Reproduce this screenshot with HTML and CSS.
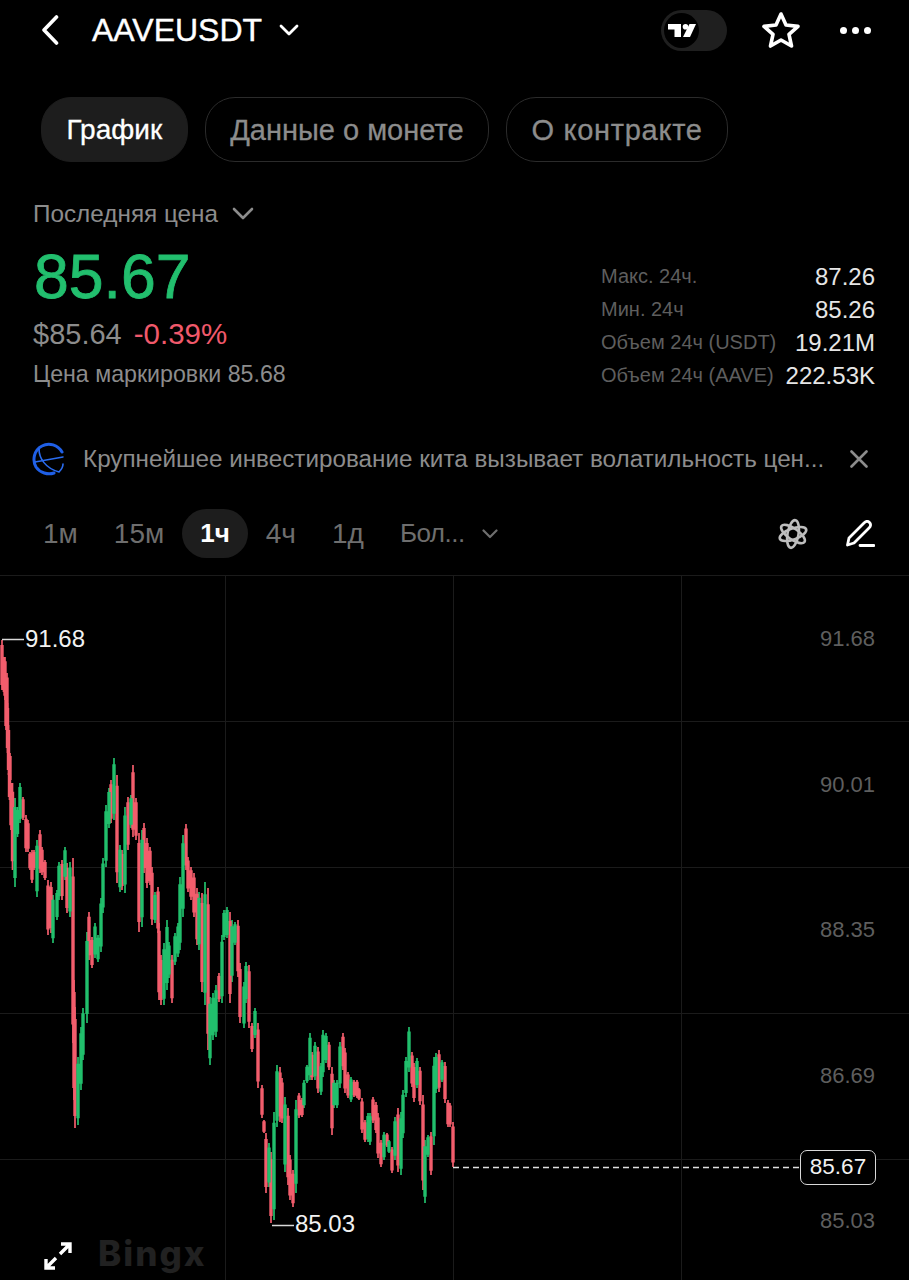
FILE: index.html
```html
<!DOCTYPE html>
<html lang="ru">
<head>
    <meta charset="UTF-8">
    <title>AAVEUSDT</title>
    <link rel="stylesheet" href="styles.css">
</head>
<body>
    <header class="topbar">
        <svg class="back" width="18" height="30" viewBox="0 0 18 30"><path d="M15.5 2 3 15l12.500 13"/></svg>
        <span class="symbol">AAVEUSDT</span>
        <svg class="symbol-arrow" width="20" height="12" viewBox="0 0 20 12"><path d="M2 2l8 8 8-8"/></svg>
        <div class="topbar-right">
            <div class="tv-toggle">
                <div class="tv-knob">
                    <svg width="28" height="15" viewBox="0 0 28 15"><path d="M0 1h13v13H6.500V6.500H0z"/><circle cx="17.500" cy="3.800" r="2.800"/><path d="M21.500 1H28l-6 13h-7z"/></svg>
                </div>
            </div>
            <svg class="star" width="40" height="38" viewBox="0 0 40 38"><path d="M20 3l5 11 12 1.400-9 8 2.500 11.600L20 29l-10.500 6L12 23.400l-9-8L15 14z"/></svg>
            <div class="more"><i></i><i></i><i></i></div>
        </div>
    </header>

    <nav class="tabs">
        <div class="tab active">График</div>
        <div class="tab">Данные о монете</div>
        <div class="tab tab-wide">О контракте</div>
    </nav>

    <section class="price-block">
        <div class="price-left">
            <div class="last-label">Последняя цена
                <svg width="22" height="14" viewBox="0 0 22 14"><path d="M2 2l9 9 9-9"/></svg>
            </div>
            <div class="last-price">85.67</div>
            <div class="sub-price">$85.64 <span class="change">-0.39%</span></div>
            <div class="mark-price">Цена маркировки 85.68</div>
        </div>
        <div class="stats">
            <div class="stat"><span>Макс. 24ч.</span><b>87.26</b></div>
            <div class="stat"><span>Мин. 24ч</span><b>85.26</b></div>
            <div class="stat"><span>Объем 24ч (USDT)</span><b>19.21M</b></div>
            <div class="stat"><span>Объем 24ч (AAVE)</span><b>222.53K</b></div>
        </div>
    </section>

    <section class="news">
        <svg class="globe" width="34" height="34" viewBox="0 0 34 34">
            <path class="globe-rim" d="M30 10C26 3 17 0 10 4 2 8 0 18 4 25c4 6 12 8 18 6"/>
            <path class="globe-thin" d="M3 20l28-5M7 7c0 9 6 19 20 23 3-3 4-6 4-8"/>
        </svg>
        <span class="news-text">Крупнейшее инвестирование кита вызывает волатильность цен...</span>
        <svg class="news-close" width="18" height="18" viewBox="0 0 18 18"><path d="M1.500 1.500l15 15M16.500 1.500l-15 15"/></svg>
    </section>

    <section class="periods">
        <span class="period">1м</span>
        <span class="period">15м</span>
        <span class="period active">1ч</span>
        <span class="period">4ч</span>
        <span class="period">1д</span>
        <span class="period more-period">Бол...
            <svg width="16" height="10" viewBox="0 0 16 10"><path d="M1.500 1.500 8 8l6.500-6.500"/></svg>
        </span>
        <div class="period-tools">
            <svg class="atom" width="32" height="32" viewBox="0 0 32 32">
                <ellipse cx="16" cy="16" rx="14" ry="5.500" transform="rotate(35 16 16)"/>
                <ellipse cx="16" cy="16" rx="14" ry="5.500" transform="rotate(100 16 16)"/>
                <ellipse cx="16" cy="16" rx="14" ry="5.500" transform="rotate(160 16 16)"/>
            </svg>
            <svg class="pen" width="30" height="28" viewBox="0 0 30 28"><path d="M2.500 25 4 18 19 3c2-2 4-2 5.500-.5s1.500 3.500-.5 5.500L9 23zM15 25.500h14"/></svg>
        </div>
    </section>

    <section class="chart">
        <svg class="chart-svg" width="909" height="705" viewBox="0 575 909 705">
            <path class="grid" d="M0 575.500H909M0 721.500H909M0 867.500H909M0 1013.500H909M0 1159.500H800M876 1159.500H909M225.500 575V1280M453.500 575V1280M681.500 575V1280"/>
            <path id="redWick" class="wick red"/>
            <path id="greenWick" class="wick green"/>
            <path id="redBody" class="body red"/>
            <path id="greenBody" class="body green"/>
            <path class="marker" d="M2 639.500H24M272 1225.500H294"/>
            <path class="last-line" d="M453 1167.500H800"/>
        </svg>
        <span class="mark high">91.68</span>
        <span class="mark low">85.03</span>
        <span class="axis axis-1">91.68</span>
        <span class="axis axis-2">90.01</span>
        <span class="axis axis-3">88.35</span>
        <span class="axis axis-4">86.69</span>
        <span class="axis axis-5">85.03</span>
        <span class="price-tag">85.67</span>
        <svg class="expand" width="28" height="28" viewBox="0 0 28 28"><path d="M17 2h9v9M26 2 16 12M11 26H2v-9M2 26l10-10"/></svg>
        <span class="watermark">Bingx</span>
    </section>

    <script src="chart.js"></script>
</body>
</html>
```

FILE: styles.css
```css
* {
    box-sizing: border-box;
}
html, body {
    margin: 0;
    background: #000;
}
body {
    width: 909px;
    height: 1280px;
    overflow: hidden;
    font-family: 'Liberation Sans', Arial, sans-serif;
    color: #8c8c8c;
}
svg path, svg ellipse {
    fill: none;
}

/* top bar */
.topbar {
    display: flex;
    align-items: center;
    height: 62px;
    padding: 0 38px 2px 41px;
}
.back path {
    stroke: #fff;
    stroke-width: 3.600;
    stroke-linecap: round;
    stroke-linejoin: round;
}
.symbol {
    margin-left: 33px;
    font-size: 32px;
    -webkit-text-stroke: 0.4px #fff;
    color: #fff;
}
.symbol-arrow {
    margin-left: 17px;
}
.symbol-arrow path {
    stroke: #fff;
    stroke-width: 2.800;
    stroke-linecap: round;
    stroke-linejoin: round;
}
.topbar-right {
    display: flex;
    align-items: center;
    margin-left: auto;
}
.tv-toggle {
    width: 66px;
    height: 41px;
    padding: 3px;
    border-radius: 21px;
    background: #1f1f1f;
}
.tv-knob {
    display: flex;
    align-items: center;
    justify-content: center;
    width: 35px;
    height: 35px;
    border-radius: 50%;
    background: #000;
}
.tv-knob svg path, .tv-knob svg circle {
    fill: #fff;
}
.star {
    margin-left: 34px;
}
.star path {
    stroke: #fff;
    stroke-width: 3.600;
    stroke-linejoin: round;
}
.more {
    display: flex;
    gap: 5px;
    margin-left: 39px;
}
.more i {
    width: 7px;
    height: 7px;
    border-radius: 50%;
    background: #fff;
}

/* tabs */
.tabs {
    display: flex;
    gap: 17px;
    margin-top: 35px;
    padding-left: 41px;
}
.tab {
    height: 65px;
    padding: 0 24.500px;
    border: 1px solid #2b2b2b;
    border-radius: 30px;
    font-size: 29px;
    -webkit-text-stroke: 0.3px currentColor;
    line-height: 64px;
    color: #8c8c8c;
    white-space: nowrap;
}
.tab.active {
    background: #1d1d1d;
    border-color: #1d1d1d;
    font-size: 28px;
    color: #fff;
}
.tab-wide {
    letter-spacing: 0.700px;
}

/* price */
.price-block {
    display: flex;
    justify-content: space-between;
    align-items: flex-end;
    margin-top: 37px;
    padding: 0 34px 0 33px;
}
.last-label {
    display: flex;
    align-items: center;
    gap: 14px;
    height: 30px;
    font-size: 24.300px;
}
.last-label svg path {
    stroke: #8c8c8c;
    stroke-width: 2.600;
    stroke-linecap: round;
    stroke-linejoin: round;
}
.last-price {
    margin-top: 16px;
    margin-left: 1px;
    font-size: 62.500px;
    -webkit-text-stroke: 0.8px currentColor;
    line-height: 62px;
    color: #22bf6e;
}
.sub-price {
    margin-top: 9px;
    font-size: 29px;
    line-height: 36px;
}
.change {
    margin-left: 4px;
    font-size: 29.500px;
    color: #f0596b;
}
.mark-price {
    margin-top: 7px;
    font-size: 23.200px;
    line-height: 30px;
}
.stats {
    width: 274px;
    margin-bottom: -3px;
}
.stat {
    display: flex;
    justify-content: space-between;
    align-items: center;
    height: 33px;
    font-size: 20px;
    color: #5e5e5e;
    white-space: nowrap;
}
.stat b {
    font-size: 24px;
    font-weight: 400;
    color: #e6e6e6;
}

/* news */
.news {
    display: flex;
    align-items: center;
    margin-top: 50px;
    padding-left: 32px;
    height: 40px;
}
.globe-rim {
    stroke: #1f5fe6;
    stroke-width: 3;
    stroke-linecap: round;
}
.globe-thin {
    stroke: #2a6cf0;
    stroke-width: 1.600;
    stroke-linecap: round;
}
.news-text {
    margin-left: 17px;
    font-size: 24.250px;
    white-space: nowrap;
}
.news-close {
    margin-left: 26px;
}
.news-close path {
    stroke: #8c8c8c;
    stroke-width: 2.600;
    stroke-linecap: round;
}

/* periods */
.periods {
    display: flex;
    align-items: center;
    margin-top: 30px;
    padding: 0 34px 0 25px;
    height: 49px;
}
.period {
    display: flex;
    align-items: center;
    gap: 17px;
    height: 49px;
    padding: 0 18px;
    border-radius: 25px;
    font-size: 28px;
    color: #6e6e6e;
    white-space: nowrap;
}
.period.active {
    background: #1d1d1d;
    font-size: 26px;
    font-weight: 700;
    color: #fff;
}
.more-period {
    font-size: 26px;
    letter-spacing: -0.500px;
}
.more-period svg path {
    stroke: #6e6e6e;
    stroke-width: 2.200;
    stroke-linecap: round;
    stroke-linejoin: round;
}
.period-tools {
    display: flex;
    align-items: center;
    gap: 36px;
    margin-left: auto;
}
.atom ellipse {
    stroke: #bdbdbd;
    stroke-width: 2.600;
}
.pen path {
    stroke: #fff;
    stroke-width: 2.800;
    stroke-linecap: round;
    stroke-linejoin: round;
}

/* chart is a free canvas, so its labels are placed on it */
.chart {
    position: relative;
    height: 705px;
    margin-top: 17px;
}
.chart-svg {
    display: block;
}
.grid {
    stroke: #1b1b1b;
    stroke-width: 1;
}
.wick {
    stroke-width: 1.700;
}
.body {
    stroke-width: 3.400;
}
.red {
    stroke: #f25d6c;
}
.green {
    stroke: #21bf6c;
}
.marker {
    stroke: #d8d8d8;
    stroke-width: 1.300;
}
.last-line {
    stroke: #e0e0e0;
    stroke-width: 1.300;
    stroke-dasharray: 6 4;
}
.mark, .axis, .price-tag {
    position: absolute;
    font-size: 22px;
    line-height: 26px;
}
.mark {
    font-size: 24px;
    color: #f2f2f2;
}
.high {
    left: 25px;
    top: 51px;
}
.low {
    left: 295px;
    top: 636px;
}
.axis {
    right: 34px;
    color: #5e5e5e;
}
.axis-1 { top: 51px; }
.axis-2 { top: 197px; }
.axis-3 { top: 342px; }
.axis-4 { top: 488px; }
.axis-5 { top: 633px; }
.price-tag {
    left: 800px;
    top: 575px;
    width: 76px;
    height: 35px;
    border: 1.500px solid #d8d8d8;
    border-radius: 7px;
    background: #000;
    font-size: 22.500px;
    line-height: 32px;
    text-align: center;
    color: #f2f2f2;
}
.expand {
    position: absolute;
    left: 44px;
    top: 667px;
}
.expand path {
    stroke: #fff;
    stroke-width: 3.400;
}
.watermark {
    position: absolute;
    left: 98px;
    top: 658px;
    font-family: 'Inter', sans-serif;
    font-size: 35px;
    font-weight: 800;
    line-height: 40px;
    letter-spacing: 2px;
    color: #212121;
}
```

FILE: chart.js
```js
const red = [
    [2,640,690],[3.5,657,692],[5,657,700],[6,690,730],[7,673,718],[7.5,703,753],[8.5,725,775],[10,753,783],[9.5,770,800],[11,783,830],[12.5,783,870],
    [23,797,820],[26,815,852],[28,820,852],[30,852,870],[32,850,883],[34,850,870],[40,830,873],[42,847,875],[45,860,880],[48,880,935],[51,882,933],
    [62,860,900],[67,863,913],[73,858,1043],[74,980,1100],[75,1007,1128],[89,912,960],[92,937,968],
    [111,780,823],[117,775,883],[122,850,890],[128,797,850],[133,765,837],[136,798,840],[139,833,932],[144,823,873],[147,838,888],[150,847,885],
    [152,867,925],[158,887,933],[159,923,1000],[161,955,1005],[172,955,1003],[186,824,870],[188,857,892],[191,867,900],[194,873,917],[197,888,945],
    [202,893,992],[208,888,1050],[219,973,1002],[230,912,1003],[238,920,977],[240,963,1023],[249,965,1028],[252,1023,1052],[258,1023,1088],[262,1085,1118],
    [264,1120,1133],[266,1133,1193],[271,1152,1223],[280,1067,1122],[282,1078,1123],[288,1108,1185],[290,1155,1200],[293,1170,1207],[299,1093,1118],[302,1098,1117],
    [312,1052,1080],[318,1047,1093],[329,1042,1070],[332,1067,1135],[343,1033,1070],[345,1048,1093],[348,1072,1098],[354,1080,1097],[357,1080,1098],[359,1088,1100],
    [362,1098,1133],[365,1120,1142],[373,1097,1123],[376,1102,1133],[378,1113,1158],[381,1140,1167],[387,1133,1147],[392,1147,1173],[398,1108,1172],
    [412,1052,1087],[414,1063,1102],[420,1067,1105],[423,1095,1190],[431,1132,1175],[439,1050,1092],[445,1062,1103],[448,1100,1127],[450,1103,1127],[453,1122,1167]
];
const green = [
    [15,798,887],[17.5,807,837],[20,783,823],[37,840,897],[53,895,943],[57,890,920],[59,862,900],[65,847,880],[70,862,917],
    [78,1057,1125],[81,1027,1090],[83,1008,1060],[87,932,1023],[95,923,958],[98,935,962],[101,898,952],[103,858,913],[106,805,867],[109,788,828],[114,758,820],
    [120,845,892],[125,807,893],[131,795,828],[142,830,927],[155,892,923],[164,943,1005],[167,920,990],[169,942,978],[175,933,965],[178,923,957],[180,877,950],[183,835,917],
    [199,892,950],[205,882,1005],[210,997,1065],[213,993,1040],[216,985,1037],[222,935,1003],[224,910,940],[227,907,938],[232,920,982],[235,922,945],
    [244,982,1028],[246,962,1003],[255,1008,1038],[269,1143,1187],[274,1112,1220],[277,1065,1127],[285,1097,1172],[296,1100,1193],[304,1080,1108],[307,1065,1083],
    [310,1033,1080],[315,1042,1080],[321,1063,1095],[323,1030,1077],[326,1033,1063],[334,1080,1108],[337,1080,1108],[340,1042,1088],[351,1077,1102],
    [368,1113,1142],[370,1113,1145],[384,1132,1160],[389,1140,1153],[395,1117,1160],[401,1112,1175],[403,1090,1138],[406,1057,1097],[409,1027,1072],[417,1058,1088],
    [425,1140,1203],[428,1135,1157],[434,1057,1145],[436,1053,1093],[442,1060,1082]
];

function wickPath(list) {
    return list.map(c => `M${c[0]} ${c[1]}V${c[2]}`).join('');
}

function bodyPath(list) {
    return list.map(c => {
        let inset = (c[2] - c[1]) * 0.1;
        return `M${c[0]} ${c[1] + inset}V${c[2] - inset}`;
    }).join('');
}

document.getElementById('redWick').setAttribute('d', wickPath(red));
document.getElementById('greenWick').setAttribute('d', wickPath(green));
document.getElementById('redBody').setAttribute('d', bodyPath(red));
document.getElementById('greenBody').setAttribute('d', bodyPath(green));
```
